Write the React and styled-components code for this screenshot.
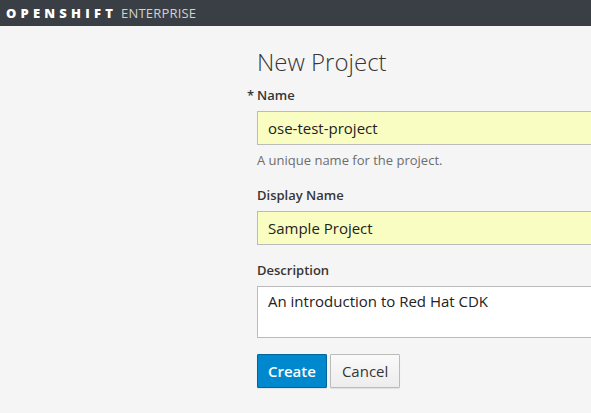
import React from 'react';
import styled, { createGlobalStyle } from 'styled-components';

const Global = createGlobalStyle`
  html, body {
    margin: 0;
    padding: 0;
    background: #f5f5f5;
    font-family: "Open Sans", "Noto Sans", sans-serif;
    color: #363636;
  }
`;

const Page = styled.div`
  width: 591px;
  height: 413px;
  overflow: hidden;
  background: #f5f5f5;
`;

const Masthead = styled.div`
  height: 26px;
  background: #393f44;
  display: flex;
  align-items: center;
  padding-left: 6px;
  font-size: 13px;
`;

const Brand = styled.span`
  color: #fff;
  font-weight: 800;
  letter-spacing: 4.2px;
`;

const BrandSub = styled.span`
  color: #d1d1d1;
  margin-left: 4px;
  letter-spacing: 0.2px;
`;

const Main = styled.div`
  padding-left: 257px;
  padding-top: 20px;
`;

const Title = styled.h1`
  margin: 0 0 8px;
  font-weight: 300;
  font-size: 24px;
  line-height: 32px;
  color: #363636;
`;

const Field = styled.div`
  margin-bottom: ${p => p.gap || 16}px;
`;

const Label = styled.label`
  display: block;
  position: relative;
  font-size: 13px;
  font-weight: 600;
  line-height: 18px;
  margin-bottom: 7px;
  color: #363636;

  &.required::before {
    content: '*';
    position: absolute;
    left: -10px;
    top: 0;
  }
`;

const Input = styled.div`
  box-sizing: border-box;
  height: ${p => p.tall ? 52 : 34}px;
  width: 360px;
  border: 1px solid #bbb;
  border-right: none;
  background: ${p => p.yellow ? '#fafdc1' : '#fff'};
  padding: ${p => p.tall ? 4 : 6}px 10px;
  font-size: 15px;
  line-height: 20px;
  color: #222;
`;

const Help = styled.div`
  font-size: 13px;
  line-height: 18px;
  color: #6d6d6d;
  margin-top: 6px;
`;

const Buttons = styled.div`
  display: flex;
  gap: 3px;
`;

const Button = styled.button`
  box-sizing: border-box;
  height: 34px;
  padding: 0 ${p => p.primary ? 10 : 11}px;
  font-family: inherit;
  font-size: 15px;
  font-weight: ${p => p.primary ? 600 : 400};
  border: 1px solid ${p => p.primary ? '#00659c' : '#bbb'};
  border-radius: 1px;
  background: ${p => p.primary ? '#0088ce' : 'linear-gradient(#fafafa, #ededed)'};
  color: ${p => p.primary ? '#fff' : '#363636'};
  box-shadow: 0 1px 1px rgba(0, 0, 0, 0.08);
`;

export default function App() {
  return (
    <Page>
      <Global />
      <Masthead>
        <Brand>OPENSHIFT</Brand>
        <BrandSub>ENTERPRISE</BrandSub>
      </Masthead>
      <Main>
        <Title>New Project</Title>
        <Field gap={17}>
          <Label className="required">Name</Label>
          <Input yellow>ose-test-project</Input>
          <Help>A unique name for the project.</Help>
        </Field>
        <Field gap={16}>
          <Label>Display Name</Label>
          <Input yellow>Sample Project</Input>
        </Field>
        <Field gap={16}>
          <Label>Description</Label>
          <Input tall>An introduction to Red Hat CDK</Input>
        </Field>
        <Buttons>
          <Button primary>Create</Button>
          <Button>Cancel</Button>
        </Buttons>
      </Main>
    </Page>
  );
}
